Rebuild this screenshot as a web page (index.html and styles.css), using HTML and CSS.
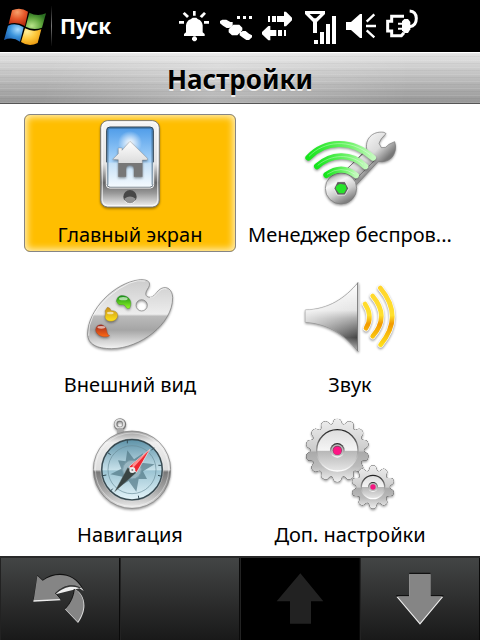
FILE: index.html
```html
<!DOCTYPE html>
<html lang="ru">
<head>
<meta charset="utf-8">
<meta name="viewport" content="width=device-width, initial-scale=1">
<title>Настройки</title>
<link rel="stylesheet" href="styles.css">
</head>
<body>
<header class="taskbar">
  <button class="start" type="button">
    <svg width="44" height="41" viewBox="9 15 132 123" aria-hidden="true">
      <defs>
        <radialGradient id="wr" cx=".45" cy=".2" r=".8"><stop offset="0" stop-color="#f7a06a"/><stop offset=".5" stop-color="#e5582a"/><stop offset="1" stop-color="#b52a10"/></radialGradient>
        <radialGradient id="wg" cx=".3" cy=".8" r=".8"><stop offset="0" stop-color="#b9e48a"/><stop offset=".6" stop-color="#5fa53c"/><stop offset="1" stop-color="#2c6f22"/></radialGradient>
        <radialGradient id="wb" cx=".7" cy=".3" r=".8"><stop offset="0" stop-color="#a8dcff"/><stop offset=".5" stop-color="#3c95dc"/><stop offset="1" stop-color="#1b5eae"/></radialGradient>
        <radialGradient id="wy" cx=".3" cy=".2" r=".9"><stop offset="0" stop-color="#fff09a"/><stop offset=".5" stop-color="#fdc83a"/><stop offset="1" stop-color="#e8930c"/></radialGradient>
      </defs>
      <path d="M36 28Q61 17 84 32L75 75Q50 60 26 69Z" fill="url(#wr)"/>
      <path d="M88 35Q112 48 138 37L126 80Q101 90 77 77Z" fill="url(#wg)"/>
      <path d="M24 74Q48 64 71 79L60 122Q38 106 12 117Z" fill="url(#wb)"/>
      <path d="M75 82Q99 95 124 85L113 126Q87 139 63 123Z" fill="url(#wy)"/>
    </svg>
    <span class="start-label">Пуск</span>
  </button>
  <div class="status">
    <svg width="32" height="36" viewBox="54 24 96 108" fill="#fff" aria-label="Уведомления" role="img">
      <path d="M99 33h8v14h-8zM57 63h15v8H57zM132 63h15v8h-15zM68 41l6-5 13 12-6 6zM119 49l13-13 6 5-12 13zM72 108v-6l6-5V76q2-14 14-18l6-5h11l5 5q12 4 14 18v21l6 5v6zM96 114l5-5h5l5 5v5l-5 5h-5l-5-5z"/>
    </svg>
    <svg width="36" height="36" viewBox="174 24 108 108" fill="#fff" aria-label="GPS" role="img">
      <path d="M231 48h9v9h-9zM249 48h9v9h-9zM267 48h9v9h-9zM180 63l7-4h12l12 7h7v10l-10 8h-8l-11-7-9-7zM206 88l14-14h18l9 9v8l-15 15h-16l-10-9zM239 100l9-7h9l10 8 9 5v6l-9 8h-8l-10-7-10-7z"/>
      <path d="M207 76l10 8M238 94l10 7" stroke="#fff" stroke-width="5"/>
    </svg>
    <svg width="32" height="36" viewBox="306 24 96 108" fill="#fff" aria-label="Передача данных" role="img">
      <path d="M324 48h6v18h-6zM336 48h12v18h-12zM351 48h21V35h6l18 18v8l-18 18h-6V66h-21zM306 96l19-18h6v12h18v18h-18v13h-6l-19-18zM354 90h12v18h-12zM372 90h6v18h-6z"/>
    </svg>
    <svg width="36" height="36" viewBox="36 24 108 108" fill="#fff" aria-label="Сигнал сети" role="img">
      <path fill-rule="evenodd" d="M45 33h60v9L81 66v33H69V66L45 42zM59 42l13 13h6l13-13z"/>
      <path d="M72 120h12v12H72zM90 96h12v36H90zM108 72h12v60h-12zM126 48h12v84h-12z"/>
    </svg>
    <svg width="31" height="36" viewBox="168 24 93 108" fill="#fff" aria-label="Громкость" role="img">
      <path d="M168 66h15l27-24h6v72h-6L183 90h-15z"/><path d="M230 65l23-22M228 78h30M230 91l23 21" stroke="#fff" stroke-width="7" fill="none"/>
    </svg>
    <svg width="35" height="36" viewBox="285 24 105 108" fill="none" stroke="#fff" aria-label="Зарядка" role="img">
      <path d="M342 49H305V64H293V93H305V107H334L342 98" stroke-width="9"/>
      <path d="M324 71h18M324 86h18" stroke-width="6"/>
      <path fill="#fff" stroke="none" d="M336 64l7-7h11l7 9v22l-7 11h-11l-7-8z"/>
      <path d="M359 33Q378 34 379 55Q379 78 359 80" stroke-width="9"/>
    </svg>
  </div>
</header>

<h1 class="title">Настройки</h1>

<main class="grid">
  <button class="tile selected" type="button">
    <svg class="icon" viewBox="180 24 300 300" aria-hidden="true">
      <defs>
        <linearGradient id="pb" x2="0" y2="1"><stop offset="0" stop-color="#f5f5f5"/><stop offset=".5" stop-color="#e2e2e2"/><stop offset=".72" stop-color="#666"/><stop offset=".84" stop-color="#999"/><stop offset="1" stop-color="#f4f4f4"/></linearGradient>
        <linearGradient id="ps" x2="0" y2="1"><stop offset="0" stop-color="#4d9be8"/><stop offset=".58" stop-color="#a9d5fb"/><stop offset=".6" stop-color="#c5e0f6"/><stop offset="1" stop-color="#f6fbff"/></linearGradient>
        <radialGradient id="pg"><stop offset="0" stop-color="#fff"/><stop offset="1" stop-color="#fff" stop-opacity="0"/></radialGradient>
        <linearGradient id="ph" x2="0" y2="1"><stop offset="0" stop-color="#fff"/><stop offset=".6" stop-color="#ddd"/><stop offset=".61" stop-color="#777"/><stop offset="1" stop-color="#777"/></linearGradient>
      </defs>
      <g class="shadow">
        <rect x="242" y="38" width="176" height="259" rx="21" fill="url(#pb)" stroke="#777" stroke-width="3"/>
        <rect x="247" y="42" width="166" height="251" rx="17" fill="none" stroke="#fff" stroke-width="4" opacity=".6"/>
      </g>
      <rect x="260" y="57" width="140" height="181" rx="10" fill="url(#ps)" stroke="#344451" stroke-width="3"/>
      <path d="M263 230V66q0-6 7-6h120q7 0 7 6v164" fill="none" stroke="#25445f" stroke-width="6" opacity=".35"/>
      <path d="M259 163v67q0 10 10 10h122q10 0 10-10v-67" fill="none" stroke="#fff" stroke-width="3"/>
      <circle cx="330" cy="105" r="36" fill="url(#pg)"/>
      <path class="shadow" d="M278 154l17-17v-17h11v7l24-27 52 51v5h-15v50h-25v-23q0-11-12-11t-12 11v23h-23v-51z" fill="url(#ph)" stroke="#777" stroke-width="1"/>
      <circle cx="330" cy="266" r="20" fill="#474747"/><path d="M313 272q17-13 34 0-4 14-17 14t-17-14" fill="#919191"/><path d="M313 278q17 19 34 0" fill="none" stroke="#eee" stroke-width="3"/>
    </svg>
    <span class="label">Главный экран</span>
  </button>

  <button class="tile" type="button">
    <svg class="icon" viewBox="180 24 300 300" aria-hidden="true">
      <defs>
        <linearGradient id="wm" gradientUnits="userSpaceOnUse" x1="350" y1="100" x2="420" y2="172"><stop offset="0" stop-color="#f8f8f8"/><stop offset=".6" stop-color="#dadada"/><stop offset="1" stop-color="#777"/></linearGradient>
        <linearGradient id="wn" x2=".5" y2="1"><stop offset="0" stop-color="#888"/><stop offset=".4" stop-color="#f7f7f7"/><stop offset=".7" stop-color="#ccc"/><stop offset="1" stop-color="#808080"/></linearGradient>
        <linearGradient id="wf"><stop offset="0" stop-color="#16e51c"/><stop offset=".65" stop-color="#72f46c"/><stop offset="1" stop-color="#c3f9bd"/></linearGradient>
      </defs>
      <g class="shadow">
        <path d="M381 127C373 94 397 68 432 73L438 77Q420 93 417 106L424 119Q438 122 447 109L464 101Q472 127 456 148Q438 165 415 160L345 235L291 210Z" fill="url(#wm)" stroke="#777" stroke-width="2"/>
        <circle cx="303" cy="241" r="47" fill="url(#wn)" stroke="#777" stroke-width="2"/>
      </g>
      <path d="M320 184l54-54M344 217l61-61" fill="none" stroke="#777" stroke-width="3"/>
      <path d="M292 221h23l11 20-11 20h-23l-10-20z" fill="#5f5f5f" stroke="#fff" stroke-width="2"/><path d="M289 234l10-7 17 3 4 12-8 14h-15l-10-14z" fill="#27e52b"/>
      <g class="shadow" fill="none" stroke="url(#wf)" stroke-width="18" stroke-linecap="round">
        <path d="M205 149C253 97 334 91 399 149"/><path d="M231 175C272 138 332 132 376 175"/><path d="M259 201Q305 168 348 202"/>
      </g>
      <path d="M207 145C253 98 329 92 390 140M233 172C273 140 329 135 369 169M261 199Q303 171 344 198" fill="none" stroke="#fff" stroke-width="3" opacity=".35"/>
    </svg>
    <span class="label">Менеджер беспров...</span>
  </button>

  <button class="tile" type="button">
    <svg class="icon" viewBox="60 3 300 300" aria-hidden="true">
      <defs>
        <linearGradient id="pl" x2="0" y2="1"><stop offset="0" stop-color="#ccc"/><stop offset=".5" stop-color="#ededed"/><stop offset=".53" stop-color="#bbb"/><stop offset=".73" stop-color="#a5a5a5"/><stop offset="1" stop-color="#f4f4f4"/></linearGradient>
        <linearGradient id="g1" x2="0" y2="1"><stop offset="0" stop-color="#148d18"/><stop offset="1" stop-color="#93fa24"/></linearGradient>
        <linearGradient id="g2" x2="0" y2="1"><stop offset="0" stop-color="#c78d15"/><stop offset="1" stop-color="#ffe51b"/></linearGradient>
        <linearGradient id="g3" x2="0" y2="1"><stop offset="0" stop-color="#9d2820"/><stop offset="1" stop-color="#ff6a13"/></linearGradient>
      </defs>
      <path class="shadow" fill-rule="evenodd" d="M83 207C83 137 161 52 241 44C266 43 273 53 266 67C257 80 253 91 264 96C285 102 289 76 305 70C321 63 337 73 338 98C338 177 241 250 155 251C110 251 83 237 83 207ZM262 121a17 17 0 1 0-34 0a17 17 0 1 0 34 0" fill="url(#pl)" stroke="#777" stroke-width="2"/>
      <path d="M86 212Q82 151 146 95Q214 38 256 48M270 98Q282 99 291 85Q306 67 320 72" fill="none" stroke="#fff" stroke-width="2"/>
      <path class="shadow" d="M169 109C171 93 184 88 198 94C214 102 216 116 209 130C195 134 200 119 187 119Q175 123 169 109Z" fill="url(#g1)" stroke="#397a38"/>
      <path class="shadow" d="M142 127Q151 128 153 137C168 136 174 144 173 153C171 169 149 173 139 164C131 157 139 147 135 138Z" fill="url(#g2)" stroke="#946b24"/>
      <path class="shadow" d="M107 193C109 178 125 176 134 184C143 191 138 209 149 212C139 219 120 215 113 207Q106 202 107 193Z" fill="url(#g3)" stroke="#923c28"/>
      <g fill="#fff" opacity=".6"><ellipse cx="190" cy="101" rx="13" ry="5"/><ellipse cx="151" cy="144" rx="10" ry="4"/><ellipse cx="124" cy="187" rx="12" ry="4"/></g>
    </svg>
    <span class="label">Внешний вид</span>
  </button>

  <button class="tile" type="button">
    <svg class="icon" viewBox="30 3 300 300" aria-hidden="true">
      <defs>
        <linearGradient id="sp" x2="0" y2="1"><stop offset="0" stop-color="#fff"/><stop offset=".4" stop-color="#e3e3e3"/><stop offset=".52" stop-color="#aaa"/><stop offset=".8" stop-color="#444"/><stop offset="1" stop-color="#bbb"/></linearGradient>
        <linearGradient id="se" x2="1" y2="0"><stop offset="0" stop-color="#fff" stop-opacity=".65"/><stop offset="1" stop-color="#fff" stop-opacity="0"/></linearGradient>
        <linearGradient id="so" gradientUnits="userSpaceOnUse" x1="0" y1="65" x2="0" y2="245"><stop offset="0" stop-color="#ffd52d"/><stop offset=".48" stop-color="#ffe02e"/><stop offset=".62" stop-color="#f29a00"/><stop offset="1" stop-color="#ffe21b"/></linearGradient>
      </defs>
      <g class="shadow"><path d="M46 135C117 133 165 99 204 53V259C165 211 117 176 46 171Z" fill="url(#sp)" stroke="#888" stroke-width="2"/><path d="M46 135C117 133 165 99 204 53V259C165 211 117 176 46 171Z" fill="url(#se)"/><path d="M203 53v205" stroke="#777" stroke-width="3"/><path d="M206 54v204" stroke="#ddd" stroke-width="3"/></g>
      <g class="shadow" fill="none" stroke-linecap="round"><g stroke="#fff" stroke-width="18"><path d="M225 117Q250 154 228 190"/><path d="M248 93Q300 154 248 214"/><path d="M271 69Q342 154 272 239"/></g><g stroke="url(#so)" stroke-width="14"><path d="M225 117Q250 154 228 190"/><path d="M248 93Q300 154 248 214"/><path d="M271 69Q342 154 272 239"/></g></g>
    </svg>
    <span class="label">Звук</span>
  </button>

  <button class="tile" type="button">
    <svg class="icon" viewBox="30 18 300 300" aria-hidden="true">
      <defs>
        <linearGradient id="cr" x2="0" y2="1"><stop offset="0" stop-color="#999"/><stop offset=".15" stop-color="#eee"/><stop offset=".5" stop-color="#ddd"/><stop offset=".53" stop-color="#777"/><stop offset=".78" stop-color="#aaa"/><stop offset="1" stop-color="#eee"/></linearGradient>
        <linearGradient id="cf" x2="0" y2="1"><stop offset="0" stop-color="#5d92a8"/><stop offset=".5" stop-color="#c7e1ea"/><stop offset=".52" stop-color="#9bc4d3"/><stop offset="1" stop-color="#e5f5fa"/></linearGradient>
      </defs>
      <g class="shadow"><circle cx="150" cy="43" r="13" fill="none" stroke="#777" stroke-width="11"/><circle cx="149" cy="42" r="13" fill="none" stroke="#ddd" stroke-width="6"/><path d="M142 54h16l6 17h-23z" fill="#aaa"/><circle cx="186" cy="179" r="116" fill="url(#cr)" stroke="#777" stroke-width="2"/></g>
      <circle cx="186" cy="179" r="110" fill="none" stroke="#fff" stroke-width="2" opacity=".6"/>
      <circle cx="186" cy="179" r="91" fill="url(#cf)" stroke="#374950" stroke-width="5"/>
      <circle cx="186" cy="179" r="94" fill="none" stroke="#fff" stroke-width="2" opacity=".5"/>
      <circle cx="186" cy="179" r="72" fill="none" stroke="#6a8c99" stroke-width="2"/>
      <path d="M172 121L192 148L219 130L214 158L254 163L219 184L231 207L206 207L199 245L176 213L149 229L158 200L121 193L154 176L144 151L167 154Z" fill="#4b7180" opacity=".65"/>
      <circle cx="186" cy="179" r="28" fill="#adc8d2" opacity=".7" stroke="#82a3b0" stroke-width="3"/>
      <path d="M172 89v11M252 113l-8 8M275 166h-10M275 199l-11-3M207 267l-2-10M121 244l7-8M98 197l11-2M113 128l9 6" stroke="#334b55" stroke-width="3"/>
      <path d="M134 245L173 173L198 188Z" fill="#394443" stroke="#64716f"/><path d="M240 118L177 170L200 187Z" fill="#ed2832" stroke="#eee" stroke-width="2"/><path d="M240 118L188 163L187 176Z" fill="#ff9090"/><circle cx="187" cy="180" r="9" fill="#eee"/><circle cx="187" cy="180" r="3" fill="#888"/>
    </svg>
    <span class="label">Навигация</span>
  </button>

  <button class="tile" type="button">
    <svg class="icon" viewBox="90 18 300 300" aria-hidden="true">
      <defs>
        <linearGradient id="gm" x2="0" y2="1"><stop offset="0" stop-color="#eee"/><stop offset=".5" stop-color="#ccc"/><stop offset=".53" stop-color="#aaa"/><stop offset=".75" stop-color="#bbb"/><stop offset="1" stop-color="#f2f2f2"/></linearGradient>
        <linearGradient id="gi" x2="0" y2="1"><stop offset="0" stop-color="#ddd"/><stop offset=".5" stop-color="#f5f5f5"/><stop offset=".52" stop-color="#b7b7b7"/><stop offset="1" stop-color="#e6e6e6"/></linearGradient>
        <linearGradient id="gr" x2="0" y2="1"><stop offset="0" stop-color="#222"/><stop offset=".5" stop-color="#999"/><stop offset="1" stop-color="#fff"/></linearGradient>
        <path id="t14" d="M-19 0L-19 -77Q-13 -79 -12 -86Q-10 -95 0 -95Q10 -95 12 -86Q13 -79 19 -77L19 0Z"/>
        <path id="t10" d="M-16 0L-16 -47Q-11 -50 -10 -56Q-9 -65 0 -65Q9 -65 10 -56Q11 -50 16 -47L16 0Z"/>
        <clipPath id="c14">
          <use href="#t14"/><use href="#t14" transform="rotate(25.714)"/><use href="#t14" transform="rotate(51.429)"/><use href="#t14" transform="rotate(77.143)"/><use href="#t14" transform="rotate(102.857)"/><use href="#t14" transform="rotate(128.571)"/><use href="#t14" transform="rotate(154.286)"/><use href="#t14" transform="rotate(180)"/><use href="#t14" transform="rotate(205.714)"/><use href="#t14" transform="rotate(231.429)"/><use href="#t14" transform="rotate(257.143)"/><use href="#t14" transform="rotate(282.857)"/><use href="#t14" transform="rotate(308.571)"/><use href="#t14" transform="rotate(334.286)"/>
        </clipPath>
        <clipPath id="c10">
          <use href="#t10"/><use href="#t10" transform="rotate(36)"/><use href="#t10" transform="rotate(72)"/><use href="#t10" transform="rotate(108)"/><use href="#t10" transform="rotate(144)"/><use href="#t10" transform="rotate(180)"/><use href="#t10" transform="rotate(216)"/><use href="#t10" transform="rotate(252)"/><use href="#t10" transform="rotate(288)"/><use href="#t10" transform="rotate(324)"/>
        </clipPath>
      </defs>
      <g transform="translate(202 121)">
        <g class="edge"><rect x="-96" y="-96" width="192" height="192" fill="url(#gm)" clip-path="url(#c14)"/></g>
        <circle r="62" fill="url(#gi)" stroke="url(#gr)" stroke-width="4"/><circle r="22" fill="url(#gr)"/><circle r="18" fill="#bbb"/><circle r="14" fill="#8d4265"/><circle cy="1" r="12" fill="#ff1685"/>
      </g>
      <g transform="translate(309 231)">
        <g class="edge"><rect x="-66" y="-66" width="132" height="132" fill="url(#gm)" clip-path="url(#c10)"/></g>
        <circle r="35" fill="url(#gi)" stroke="url(#gr)" stroke-width="4"/><circle r="15" fill="url(#gr)"/><circle r="12" fill="#bbb"/><circle r="8" fill="#f21780"/>
      </g>
    </svg>
    <span class="label">Доп. настройки</span>
  </button>
</main>

<nav class="softkeys">
  <button class="key" type="button" aria-label="Назад">
    <svg width="56" height="52" viewBox="99 84 168 156" aria-hidden="true">
      <path d="M115 94L131 109C170 78 228 85 254 138C231 118 196 121 170 148L185 165L103 169Z" fill="#111" transform="translate(0 -4)"/><path d="M104 164L103 170L185 166L170 148C196 121 231 118 254 138L248 128Z" fill="#eee"/><path d="M115 92L131 107C170 80 224 83 250 132C231 114 194 116 168 145L183 162L104 166Z" fill="#858585"/><path d="M227 132C255 145 271 187 237 234L198 193Q224 167 227 132Z" fill="#ddd"/><path d="M226 132C253 145 267 187 236 230L199 191Q223 165 226 132Z" fill="#858585"/><path d="M199 191Q223 165 226 132" fill="none" stroke="#111" stroke-width="3"/>
    </svg>
  </button>
  <button class="key" type="button" aria-label="Пусто"></button>
  <button class="key off" type="button" aria-label="Вверх" disabled>
    <svg width="48" height="52" viewBox="108 76 144 156" aria-hidden="true"><path d="M181 77L250 161H213V228H150V161H110Z" fill="#222"/></svg>
  </button>
  <button class="key" type="button" aria-label="Вниз">
    <svg width="48" height="54" viewBox="470 82 144 162" aria-hidden="true"><path d="M510 84H573V151H612V156L542 238L471 156V151H510Z" fill="#111"/><path d="M510 89H573V156H612L542 240L471 156H510Z" fill="#eee"/><path d="M510 88H573V155H609L542 235L474 155H510Z" fill="#858585"/></svg>
  </button>
</nav>
</body>
</html>
```
FILE: styles.css
```css
* {
  box-sizing: border-box;
}

body {
  margin: 0;
  min-height: 100vh;
  display: flex;
  flex-direction: column;
  background: #fff;
  color: #000;
  font-family: "Noto Sans", "Open Sans", sans-serif;
}

button {
  margin: 0;
  padding: 0;
  border: 0;
  background: none;
  color: inherit;
  font: inherit;
}

svg {
  display: block;
  flex: none;
}

.taskbar {
  display: flex;
  align-items: center;
  justify-content: space-between;
  height: 52px;
  padding: 0 60px 0 3px;
  background: #000;
  color: #fff;
}

.start {
  display: flex;
  align-items: center;
  gap: 4px;
}

.start-label {
  padding-left: 8px;
  border-left: 1px solid;
  border-image: linear-gradient(#000, #777, #000) 1;
  font-size: 21px;
  font-weight: 700;
  line-height: 40px;
}

.status {
  display: flex;
  align-items: center;
  gap: 8px;
}

.title {
  margin: 0;
  height: 52px;
  border-top: 1px solid #fff;
  border-bottom: 1px solid #555;
  background:
    repeating-linear-gradient(rgba(255, 255, 255, 0.12) 0 1px, transparent 1px 3px, rgba(0, 0, 0, 0.04) 3px 4px, transparent 4px 7px),
    linear-gradient(100deg, rgba(255, 255, 255, 0) 10%, rgba(255, 255, 255, 0.25) 45%, rgba(255, 255, 255, 0) 85%),
    linear-gradient(#e4e4e4, #bdbdbd 50%, #969696);
  font-size: 26px;
  font-weight: 700;
  line-height: 52px;
  text-align: center;
  text-shadow: 0 2px 0 #eee;
}

.grid {
  flex: 1;
  display: grid;
  grid-template-columns: 1fr 1fr;
  align-content: start;
  gap: 12px 8px;
  padding: 10px 24px 4px;
}

.tile {
  display: flex;
  flex-direction: column;
  align-items: center;
  gap: 5px;
  min-width: 0;
  padding: 1px 0 2px;
  border: 1px solid transparent;
  border-radius: 6px;
}

.selected {
  border-color: #858585;
  background: #ffbe00;
  box-shadow: inset 0 0 7px 2px #fff0bd;
}

.icon {
  width: 100px;
  height: 100px;
}

.shadow {
  filter: drop-shadow(0 4px 3px rgba(0, 0, 0, 0.4));
}

.edge {
  filter: drop-shadow(0 0 1px #333) drop-shadow(0 0 1px #555) drop-shadow(0 4px 3px rgba(0, 0, 0, 0.4));
}

.label {
  font-size: 20px;
  line-height: 28px;
  white-space: nowrap;
}

.softkeys {
  display: grid;
  grid-template-columns: repeat(4, 1fr);
  height: 84px;
  border-top: 2px solid #292929;
  background: #111;
}

.key {
  display: grid;
  place-items: center;
  border-right: 1px solid #0a0a0a;
  border-left: 1px solid #222;
  background: linear-gradient(#434545, #303131 45%, #191919);
}

.off {
  background: #000;
}
```
